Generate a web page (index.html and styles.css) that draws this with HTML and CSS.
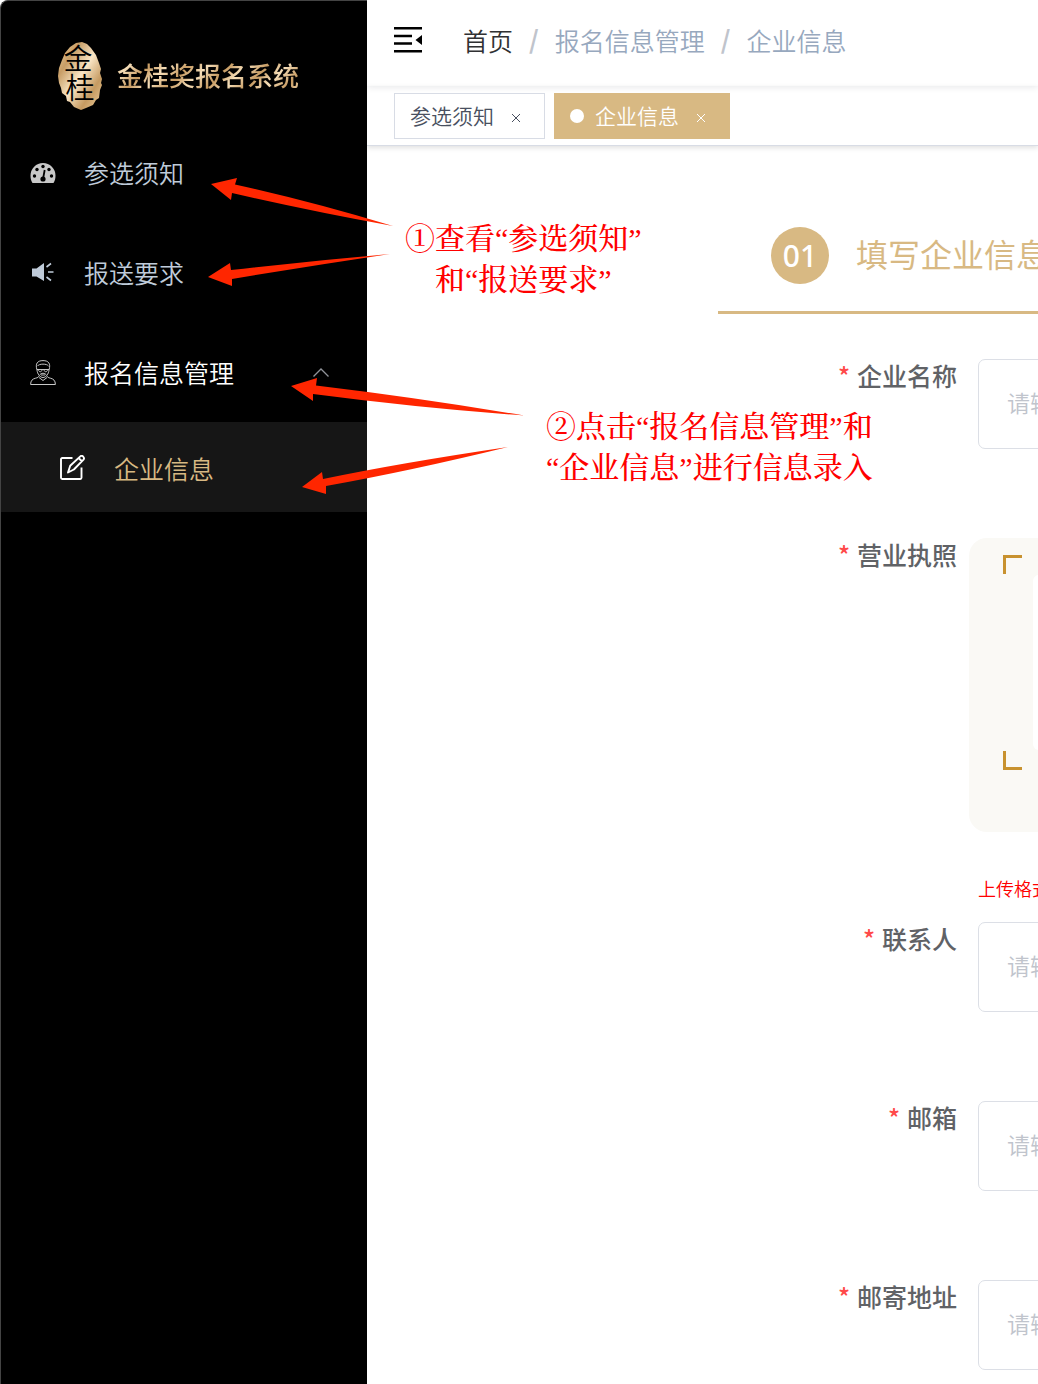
FILE: index.html
```html
<!DOCTYPE html>
<html lang="zh-CN">
<head>
<meta charset="utf-8">
<meta name="viewport" content="width=device-width, initial-scale=1">
<title>金桂奖报名系统</title>
<link rel="stylesheet" href="styles.css">
</head>
<body>
<div class="app">
  <aside class="sidebar">
    <div class="brand">
      <svg class="emblem" viewBox="0 0 44 68" aria-hidden="true">
        <defs>
          <linearGradient id="gold" x1="0" y1="0" x2="1" y2="1">
            <stop offset="0" stop-color="#f0d3a2"/>
            <stop offset=".25" stop-color="#c79d66"/>
            <stop offset=".5" stop-color="#fae6c6"/>
            <stop offset=".75" stop-color="#c59a61"/>
            <stop offset="1" stop-color="#efd2a0"/>
          </linearGradient>
        </defs>
        <path fill="url(#gold)" d="M18 1 24 0l5 2 4 4 5 7 3 8 2 6-1 4 2 6-1 4 1 2-2 5-1 8-3 2-3 5-7 3-5 2-7-3-4-5-3-1-1-5-4-3-1-5-2-5L0 34l1-8 3-8 3-7 5-6z"/>
        <text class="emblem-text" x="20" y="28">金</text>
        <text class="emblem-text" x="22" y="57">桂</text>
      </svg>
      <span class="brand-name">金桂奖报名系统</span>
    </div>
    <nav class="menu">
      <a class="menu-item" href="#notice">
        <svg class="icon" viewBox="0 0 26 26" aria-hidden="true">
          <path fill="#c8c8c8" d="M2.500 23C1 21 .5 18 .5 15.500a12.500 12.500 0 0 1 25 0c0 2.500-.5 5.500-2 7.500z"/>
          <g fill="#000"><circle cx="4.500" cy="16" r="1.700"/><circle cx="7" cy="9.500" r="1.700"/><circle cx="13" cy="6.500" r="1.700"/><circle cx="19" cy="9.500" r="1.700"/><circle cx="21.500" cy="16" r="1.700"/><circle cx="13" cy="19" r="2.600"/></g>
          <path stroke="#000" stroke-width="1.800" d="M13 19 14.700 10"/>
        </svg>
        <span class="menu-text">参选须知</span>
      </a>
      <a class="menu-item" href="#requirements">
        <svg class="icon" viewBox="0 0 26 26" aria-hidden="true">
          <path fill="#bfcbd9" d="M2 8.500h4.500L14 3v18l-7.500-4.500H2z"/>
          <path stroke="#bfcbd9" stroke-width="1.600" fill="none" d="m16.500 7 4.500-3.500M18 12h5.500M16.500 17l4.500 3.500"/>
        </svg>
        <span class="menu-text">报送要求</span>
      </a>
      <a class="menu-item menu-item-open" href="#manage">
        <svg class="icon" viewBox="0 0 26 26" fill="none" stroke="#c8c8c8" aria-hidden="true">
          <path d="M.6 24.500c0-4 2-5.600 5-6.300 2-.5 3-1 3.500-2.200M25.400 24.500c0-4-2-5.600-5-6.300-2-.5-3-1-3.500-2.200M.6 24.500h24.800"/>
          <path d="M7 10C5 3.500 7.500.6 13 .6S21 3.500 19 10c-.4 4-3 7.500-6 7.500S7.400 14 7 10z"/>
          <path d="M7.500 6C9 3.500 17 3.500 18.500 6M7 9.500h12M8.500 9.500c0 3 3.500 3 3.500 0M14 9.500c0 3 3.500 3 3.500 0M9.500 15.500c1-3 6-3 7 0M11 15h4M9 17.500l4 3 4-3"/>
        </svg>
        <span class="menu-text">报名信息管理</span>
        <svg class="chevron" viewBox="0 0 16 9" fill="none" stroke="#909399" stroke-width="1.300" aria-hidden="true"><path d="m.5 8.500 7.500-7.500 7.500 7.500"/></svg>
      </a>
      <a class="menu-item menu-sub" href="#company">
        <svg class="icon" viewBox="0 0 26 26" fill="none" stroke="#fff" stroke-width="1.900" stroke-linejoin="round" aria-hidden="true">
          <path d="M12.500 3H2.200C1.500 3 1 3.500 1 4.200v18.600c0 .7.500 1.200 1.200 1.200h18.100c.7 0 1.200-.5 1.200-1.200V12.500"/>
          <path d="m8 17.500 2.200-6.700L20.300 1.400c1.800-1.600 4.800 1 3.200 3.200L13.900 14.500zM18.500 3l3.200 3"/>
        </svg>
        <span>企业信息</span>
      </a>
    </nav>
  </aside>

  <main class="main">
    <header class="topbar">
      <button class="fold" type="button" aria-label="收起菜单">
        <svg viewBox="0 0 28 26" aria-hidden="true"><path d="M0 0h28v2.500H0zM0 7.700h18v2.500H0zM0 15.300h18v2.500H0zM0 23h28v2.500H0zM28 8v10l-6.500-5z"/></svg>
      </button>
      <nav class="breadcrumb">
        <a class="crumb crumb-home" href="#home">首页</a><span class="slash">/</span>
        <a class="crumb" href="#manage">报名信息管理</a><span class="slash">/</span>
        <a class="crumb" href="#company">企业信息</a>
      </nav>
    </header>
    <div class="tags">
      <div class="tag"><a href="#notice">参选须知</a><button class="close" type="button" aria-label="关闭参选须知"><svg viewBox="0 0 8 8"><path d="m0 0 8 8M8 0 0 8"/></svg></button></div>
      <div class="tag tag-active"><span class="dot"></span><a href="#company">企业信息</a><button class="close" type="button" aria-label="关闭企业信息"><svg viewBox="0 0 8 8"><path d="m0 0 8 8M8 0 0 8"/></svg></button></div>
    </div>

    <div class="step">
      <span class="step-number">01</span>
      <span class="step-title">填写企业信息</span>
    </div>

    <form class="form">
      <div class="row">
        <label class="label" for="company">企业名称</label>
        <input class="input" id="company" type="text" placeholder="请输入">
      </div>
      <div class="row">
        <label class="label" for="license">营业执照</label>
        <div class="upload-field">
          <button class="upload" id="license" type="button" aria-label="上传营业执照">
            <span class="frame">
              <span class="corner corner-top"></span>
              <span class="corner corner-bottom"></span>
              <span class="preview"></span>
            </span>
          </button>
          <p class="hint">上传格式</p>
        </div>
      </div>
      <div class="row">
        <label class="label" for="contact">联系人</label>
        <input class="input" id="contact" type="text" placeholder="请输入">
      </div>
      <div class="row">
        <label class="label" for="email">邮箱</label>
        <input class="input" id="email" type="email" placeholder="请输入">
      </div>
      <div class="row">
        <label class="label" for="address">邮寄地址</label>
        <input class="input" id="address" type="text" placeholder="请输入">
      </div>
    </form>
  </main>

  <svg class="arrows" width="540" height="500" viewBox="0 0 540 500" fill="#ff2600" aria-hidden="true">
    <path d="M211 184 237 178 235 184.500Q310 201 393 226Q310 211 232 193L231 200z"/>
    <path d="M208 277 230 263 231 270Q310 261 390 254Q310 266 232 279L232 286z"/>
    <path d="M291 386 317 378 316 385.500Q420 398 524 415.500Q420 408 313 394L313 401z"/>
    <path d="M302 487 322 472 323 479Q400 463 508 447Q410 471 326 486L326 494z"/>
  </svg>
  <p class="note note-one">①查看“参选须知”<br>和“报送要求”</p>
  <p class="note note-two">②点击“报名信息管理”和<br>“企业信息”进行信息录入</p>
</div>
</body>
</html>
```

FILE: styles.css
```css
* {
  box-sizing: border-box;
}

body {
  margin: 0;
  background: #fff;
  font-family: "Noto Sans CJK SC", sans-serif;
  font-size: 25px;
  font-weight: 350;
  line-height: 36px;
}

a {
  color: inherit;
  text-decoration: none;
}

button {
  padding: 0;
  border: 0;
  background: none;
  font: inherit;
}

svg {
  display: block;
}

.app {
  position: relative;
  display: flex;
  min-height: 100vh;
  overflow: hidden;
}

/* Sidebar */
.sidebar {
  flex: 0 0 367px;
  background: #000;
  border-left: 1px solid #444;
  border-top: 1px solid #444;
  border-top-left-radius: 8px;
}

.brand {
  display: flex;
  align-items: center;
  gap: 15px;
  height: 122px;
  padding: 28px 0 0 57px;
}

.emblem {
  width: 44px;
  height: 68px;
  overflow: visible;
}

.emblem-text {
  font-size: 29px;
  font-weight: 350;
  text-anchor: middle;
}

.brand-name {
  padding-bottom: 2px;
  font-size: 26px;
  font-weight: 500;
  color: transparent;
  background: repeating-linear-gradient(135deg, #c99e66 0 2px, #f6dfba 14px, #c99e66 28px);
  background-clip: text;
  -webkit-background-clip: text;
}

.menu-item {
  display: flex;
  align-items: center;
  gap: 28px;
  height: 100px;
  padding: 0 38px 0 29px;
  color: #bfcbd9;
}

.menu-item-open {
  height: 99px;
  color: #fff;
}

.menu-text {
  padding-bottom: 2px;
}

.menu-sub {
  height: 90px;
  padding-top: 2px;
  padding-left: 59px;
  background: #161616;
  color: #d8b983;
}

.icon {
  width: 26px;
  height: 26px;
}

.chevron {
  width: 16px;
  height: 9px;
  margin-left: auto;
}

/* Header */
.main {
  flex: 1;
  min-width: 0;
  overflow: hidden;
}

.topbar {
  display: flex;
  align-items: center;
  gap: 41px;
  height: 86px;
  padding: 0 27px 6px;
  box-shadow: 0 1px 7px rgba(0, 21, 41, .1);
}

.fold svg {
  width: 28px;
  height: 26px;
}

.breadcrumb {
  display: flex;
  white-space: nowrap;
}

.crumb {
  color: #97a8be;
}

.crumb-home {
  color: #303133;
}

.slash {
  margin: 0 16px;
  color: #c0c4cc;
  font-weight: 700;
  line-height: 32px;
}

.tags {
  display: flex;
  align-items: center;
  gap: 9px;
  height: 60px;
  padding: 0 27px;
  border-bottom: 1px solid #d8dce5;
  box-shadow: 0 2px 5px rgba(0, 0, 0, .12);
}

.tag {
  display: flex;
  align-items: center;
  height: 46px;
  padding: 0 24px 0 15px;
  border: 1px solid #d8dce5;
  color: #495060;
  font-size: 21px;
  white-space: nowrap;
}

.tag a {
  padding-bottom: 2px;
}

.tag-active {
  border-color: #d8b983;
  background: #d8b983;
  color: #fff;
}

.dot {
  width: 14px;
  height: 14px;
  margin-right: 11px;
  border-radius: 50%;
  background: #fff;
}

.close {
  margin: 4px 0 0 18px;
  color: inherit;
}

.close svg {
  width: 8px;
  height: 8px;
  stroke: currentColor;
}

/* Current step */
.step {
  display: flex;
  align-items: center;
  gap: 27px;
  margin: 54px 0 0 351px;
  padding: 27px 0 27px 53px;
  border-bottom: 3px solid #d8b983;
  color: #d8b983;
  font-size: 32px;
  white-space: nowrap;
}

.step-number {
  flex: none;
  width: 58px;
  border-radius: 50%;
  background: #d8b983;
  color: #fff;
  font-family: "Noto Sans", "Noto Sans CJK SC", sans-serif;
  font-size: 30px;
  font-weight: 500;
  line-height: 57px;
  text-align: center;
}

.step-title {
  padding-bottom: 6px;
  font-weight: 400;
  line-height: 50px;
}

/* Form */
.form {
  display: grid;
  gap: 89px;
  padding: 45px 0 14px;
}

.row {
  display: grid;
  grid-template-columns: 590px 640px;
  align-items: start;
  gap: 21px;
}

.row:nth-child(2) {
  margin-bottom: -69px;
}

.label {
  color: #606266;
  font-weight: 500;
  line-height: 32px;
  text-align: right;
}

.label::before {
  content: "*";
  margin-right: 7px;
  color: #ff4949;
}

.input {
  width: 100%;
  height: 90px;
  padding: 0 28px 4px;
  border: 1px solid #dcdfe6;
  border-radius: 7px;
  background: #fff;
  color: #606266;
  font: inherit;
  font-size: 23px;
}

.input::placeholder {
  color: #c0c4cc;
  opacity: 1;
}

.upload-field {
  margin-left: -9px;
}

.upload {
  display: block;
  width: 100%;
  height: 294px;
  padding: 17px 34px 62px;
  border-radius: 18px;
  background: #faf9f5;
}

.frame {
  display: grid;
  grid-template-columns: 19px 1fr;
  grid-template-rows: 19px 1fr 19px;
  column-gap: 11px;
  height: 215px;
}

.corner {
  border-left: 3px solid #c8922f;
}

.corner-top {
  grid-row: 1;
  border-top: 3px solid #c8922f;
}

.corner-bottom {
  grid-row: 3;
  border-bottom: 3px solid #c8922f;
}

.preview {
  grid-area: 1 / 2 / 4 / 3;
  margin: 20px 0;
  border-radius: 6px;
  background: #fff;
}

.hint {
  margin: 43px 0 1px 9px;
  color: #f00;
  font-size: 18px;
  line-height: 26px;
  white-space: nowrap;
}

/* Guide notes laid over the page */
.arrows {
  position: absolute;
  top: 0;
  left: 0;
  pointer-events: none;
}

.note {
  position: absolute;
  margin: 0;
  color: #f00;
  font-family: "Liberation Serif", "Noto Serif CJK SC", "Noto Sans CJK SC", serif;
  font-size: 30px;
  font-weight: 500;
  line-height: 41px;
  text-align: center;
  white-space: nowrap;
}

.note-one {
  top: 218px;
  left: 405px;
}

.note-two {
  top: 406px;
  left: 546px;
}
```
